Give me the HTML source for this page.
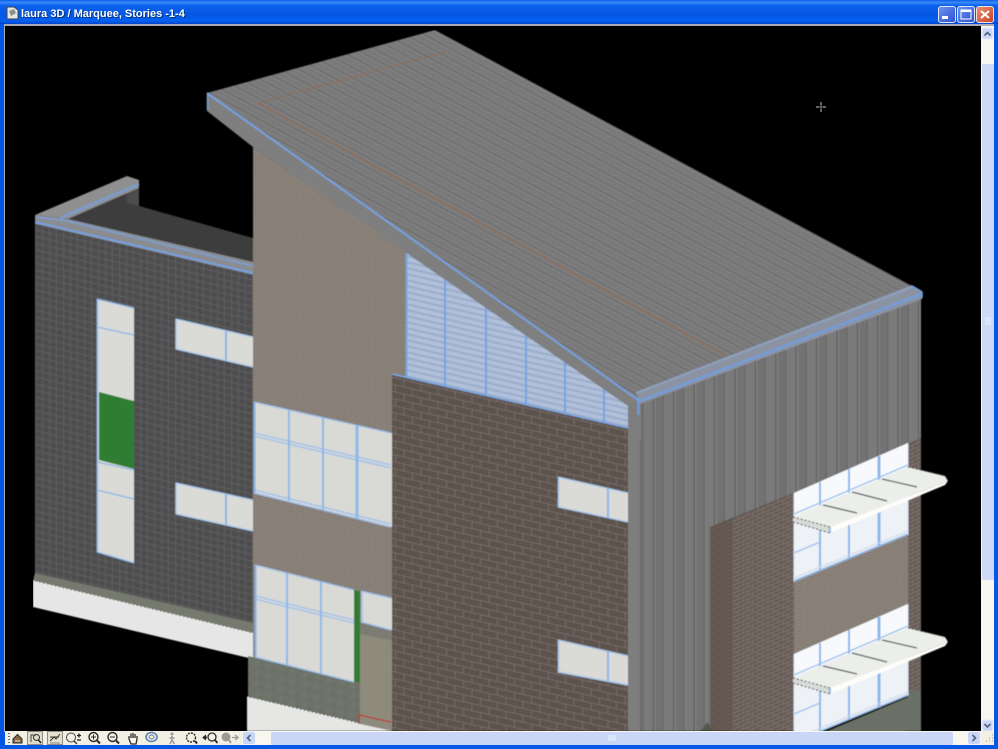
<!DOCTYPE html>
<html><head><meta charset="utf-8"><title>laura 3D</title>
<style>html,body{margin:0;padding:0;background:#000;overflow:hidden}svg{display:block}</style></head>
<body>
<svg xmlns="http://www.w3.org/2000/svg" width="998" height="749" viewBox="0 0 998 749">
<defs>
<filter id="soft" x="0" y="0" width="100%" height="100%"><feGaussianBlur stdDeviation=".45"/></filter>
<filter id="soft2" x="-5%" y="-5%" width="110%" height="110%"><feGaussianBlur stdDeviation=".3"/></filter>
<linearGradient id="tb" x1="0" y1="0" x2="0" y2="1">
<stop offset="0" stop-color="#0a5ce8"/><stop offset=".1" stop-color="#3a8cfa"/><stop offset=".22" stop-color="#0d63ec"/><stop offset=".6" stop-color="#0457e4"/><stop offset=".88" stop-color="#0560f0"/><stop offset="1" stop-color="#0244c8"/>
</linearGradient>
<linearGradient id="btn" x1="0" y1="0" x2="1" y2="1"><stop offset="0" stop-color="#6f94ee"/><stop offset="1" stop-color="#2c4fd0"/></linearGradient>
<linearGradient id="cls" x1="0" y1="0" x2="1" y2="1"><stop offset="0" stop-color="#ea9478"/><stop offset="1" stop-color="#c8401c"/></linearGradient>
<pattern id="roof" width="9" height="9" patternUnits="userSpaceOnUse" patternTransform="rotate(28.3)">
<rect width="9" height="9" fill="#7b7b7b"/><rect y="0" width="9" height="1" fill="#666667"/><rect y="1" width="9" height="1" fill="#848485"/>
<rect y="4" width="9" height="1" fill="#777778"/>
</pattern>
<pattern id="tan" width="6" height="5" patternUnits="userSpaceOnUse" patternTransform="skewY(13)">
<rect width="6" height="5" fill="#898178"/><path d="M0 1L3 0L6 1M0 3.500L3 2.500L6 3.500" stroke="#999188" stroke-width=".8" fill="none"/><path d="M0 2.200L3 1.200L6 2.200M0 4.700L3 3.700L6 4.700" stroke="#797068" stroke-width=".8" fill="none"/>
</pattern>
<pattern id="brick" width="17" height="14" patternUnits="userSpaceOnUse" patternTransform="skewY(12.9)">
<rect width="17" height="14" fill="#5d524e"/>
<path d="M0 .5H17M0 7.500H17" stroke="#776b66" stroke-width="1"/><path d="M4.500 0V7M13 7V14" stroke="#776b66" stroke-width="1"/>
</pattern>
<pattern id="brick2" width="10" height="8" patternUnits="userSpaceOnUse" patternTransform="skewY(-23)">
<rect width="10" height="8" fill="#685c58"/>
<path d="M0 .5H10M0 4.500H10" stroke="#7d726b" stroke-width=".9"/><path d="M3 0V4M8 4V8" stroke="#7d726b" stroke-width=".9"/>
</pattern>
<pattern id="dark" width="7" height="6.7" patternUnits="userSpaceOnUse" patternTransform="skewY(13)">
<rect width="7" height="6.7" fill="#4d4d4f"/><rect width="7" height="1" fill="#615f5e"/><rect width="1" height="6.7" fill="#5f5d5c"/>
</pattern>
<pattern id="metal" width="20.4" height="10" patternUnits="userSpaceOnUse">
<rect width="20.4" height="10" fill="#727272"/><rect x="0" width="1.400" height="10" fill="#5f5f5f"/><rect x="1.400" width="1.200" height="10" fill="#858585"/><rect x="10.200" width="1.200" height="10" fill="#656565"/><rect x="11.400" width="1" height="10" fill="#828282"/><rect x="12.400" width="8" height="10" fill="#7a7a7a"/>
</pattern>
<pattern id="glass" width="10" height="6" patternUnits="userSpaceOnUse" patternTransform="skewY(12.9)">
<rect width="10" height="6" fill="#b0c0da"/><rect width="10" height="2" fill="#9aacc9"/>
</pattern>
<pattern id="conc" width="12" height="10" patternUnits="userSpaceOnUse" patternTransform="skewY(13)">
<rect width="12" height="10" fill="#6e7369"/><rect x="3" y="2" width="4" height="4" fill="#72776d"/><rect x="8" y="6" width="3" height="3" fill="#696e64"/>
</pattern>
<g id="rwin">
<polygon points="794,493 908,443 908,535 794,582" fill="#eef1f6"/>
<polygon points="794,493 908,443 908,467 794,517" fill="#f7f9fd"/>
<path d="M820 482V571M849 469V559M879 456V547" stroke="#8db7ea" stroke-width="2" fill="none"/>
<path d="M879 456V547" stroke="#8db7ea" stroke-width="3"/>
<path d="M794 514L908 465" stroke="#9cc0ec" stroke-width="1.400" fill="none"/>
<path d="M794 553L820 542" stroke="#9cc0ec" stroke-width="1.400" fill="none"/>
<path d="M794 581L908 534" stroke="#8db7ea" stroke-width="1.600" fill="none"/>
<path d="M794 578L908 531" stroke="#c8d8ea" stroke-width="1" fill="none"/>
<path d="M794 493V582M908 443V535" stroke="#cfdcec" stroke-width="1" fill="none"/>
<polygon points="793,517 908,467 945,476 948,481 830,527" fill="#eceeea"/>
<polygon points="830,527 948,481 945,485 830,533" fill="#fdfdfb"/>
<polygon points="793,517 830,527 830,533 793,522" fill="#d8dcd8"/>
<path d="M793 517L830 527M793 522L830 533" stroke="#333" stroke-width="1" stroke-dasharray="2 2" fill="none"/>
<path d="M908 467L945 476" stroke="#555" stroke-width="1" stroke-dasharray="2 2" fill="none"/>
<path d="M823 505L857 513M852 492L887 501M882 479L917 487" stroke="#4a525c" stroke-width="1.300" fill="none"/>
<path d="M830 527V533" stroke="#7aa6d8" stroke-width="1.500"/>
</g>
</defs>

<rect width="998" height="749" fill="#0456e4"/>
<rect width="998" height="24" fill="url(#tb)"/>
<rect x="4" y="24" width="990" height="2" fill="#a9a8b4"/>
<rect x="4" y="24" width="1" height="708" fill="#a9a8b4"/>
<rect x="5" y="26" width="976" height="705" fill="#000"/>

<g filter="url(#soft)">
<!-- left dark wing -->
<polygon points="68,219 139,188 139,206 253,238 253,263" fill="#3d3d3d"/>
<polygon points="127,192 139,188 139,206 127,203" fill="#4e4e4e"/>
<polygon points="35,215 127,176 139,180 139,188 68,219" fill="#8f8f90"/>
<polygon points="35,215 68,219 253,262 253,275 35,224" fill="#8a8c90"/>
<polygon points="35,224 253,275 253,628 35,575" fill="url(#dark)"/>
<path d="M35 222L253 273" stroke="#74a0de" stroke-width="2" fill="none"/>
<path d="M36 217L68 221L253 266" stroke="#7e9cc6" stroke-width="2" fill="none"/>
<path d="M60 218L139 184" stroke="#7e9cc6" stroke-width="3" fill="none"/>
<polygon points="35,573 253,623 253,634 33,581" fill="#767a6e"/>
<polygon points="33,581 255,634 253,659 33,607" fill="#e6e6e6"/>
<path d="M33 581L255 634" stroke="#fff" stroke-width="1" stroke-dasharray="2 2"/>

<polygon points="97,299 134,308 134,563 97,552" fill="#dadad7"/>
<polygon points="99,392 134,401 134,469 99,460" fill="#2e7d33"/>
<path d="M97 327L134 335M97 462L134 470M97 490L134 499M97 299L134 308M97 552L134 563" stroke="#8db5e6" stroke-width="1.300" fill="none"/>
<path d="M97.500 299V552" stroke="#9cc3ee" stroke-width="1.600"/>
<polygon points="176,319 253,337 253,367 176,349" fill="#dadad7"/>
<path d="M176 319L253 337M176 349L253 367M176 319V349" stroke="#a5c6ec" stroke-width="1.400" fill="none"/><path d="M226 331V361" stroke="#8db5e6" stroke-width="2"/>
<polygon points="176,483 253,500 253,531 176,514" fill="#dadad7"/>
<path d="M176 483L253 500M176 514L253 531M176 483V514" stroke="#a5c6ec" stroke-width="1.400" fill="none"/><path d="M226 494V525" stroke="#8db5e6" stroke-width="2"/>

<!-- tan wall -->
<polygon points="253,147 406,252 406,382 394,378 394,731 253,731" fill="url(#tan)"/>
<polygon points="248,656 360,682 360,724 248,697" fill="url(#conc)"/>
<polygon points="360,622 394,630 394,731 360,724" fill="#8e8a7b"/>
<polygon points="360,622 394,630 394,641 360,634" fill="#7d7b72"/>
<polygon points="247,697 360,724 392,731 247,731" fill="#e6e6e4"/>
<path d="M247 697L357 723" stroke="#fff" stroke-width="1" stroke-dasharray="2 2"/>

<!-- windows on tan wall -->
<polygon points="254,402 392,433 392,527 254,493" fill="#d9d9d6"/>
<path d="M254 402L391 433M254 433L391 465M254 436L391 468M254 493L391 527M254 490L391 524" stroke="#9cc0ec" stroke-width="1.400" fill="none"/>
<path d="M254.500 402V493" stroke="#86b0e4" stroke-width="2"/>
<path d="M289 410V501M323 418V510" stroke="#8db7ea" stroke-width="2"/><path d="M357 425V518" stroke="#8db7ea" stroke-width="3"/>

<polygon points="255,565 354,590 354,682 255,657" fill="#d9d9d6"/>
<path d="M255 565L354 590M255 596L354 620M255 599L354 623M255 657L354 682" stroke="#9cc0ec" stroke-width="1.400" fill="none"/>
<path d="M255.500 565V657" stroke="#86b0e4" stroke-width="2"/>
<path d="M287 573V665M321 582V674" stroke="#8db7ea" stroke-width="2"/>
<polygon points="354,590 360,591 360,682 354,682" fill="#2e7d33"/>
<polygon points="361,591 392,598 392,630 361,622" fill="#d9d9d6"/>
<path d="M361 591L391 598M361 622L391 630M362 591V622" stroke="#9cc0ec" stroke-width="1.400" fill="none"/>
<path d="M359 723V715L391 722" stroke="#c03434" stroke-width="1.200" fill="none"/>

<!-- glass -->
<polygon points="406,252 628,405 628,428 406,378" fill="url(#glass)"/>
<path d="M406.500 252V378M445 279V387M486 307V396M526 335V405M565 362V414M604 389V423" stroke="#74a4e2" stroke-width="2" fill="none"/>

<!-- brick centre -->
<polygon points="392,374 628,428 628,731 392,731" fill="url(#brick)"/>
<path d="M392 374L628 428" stroke="#7aa6e0" stroke-width="1.600"/>
<polygon points="558,477 628,493 628,522 558,507" fill="#dadad7"/>
<path d="M558 477L628 493M558 507L628 522M558.500 477V507" stroke="#a5c6ec" stroke-width="1.400" fill="none"/><path d="M608 488V518" stroke="#8db5e6" stroke-width="2"/>
<polygon points="558,640 628,656 628,685 558,672" fill="#dadad7"/>
<path d="M558 640L628 656M558 672L628 685M558.500 640V672" stroke="#a5c6ec" stroke-width="1.400" fill="none"/><path d="M608 651V681" stroke="#8db5e6" stroke-width="2"/>

<!-- right wall -->
<polygon points="640,403 921,297 921,445 908,443 794,493 710,527 710,731 640,731" fill="url(#metal)"/>
<polygon points="628,405 641,400 641,731 628,731" fill="#7e7e7e"/>
<path d="M640.500 403V731" stroke="#666" stroke-width="1"/>
<polygon points="710,527 794,493 794,731 710,731" fill="url(#brick2)"/>
<polygon points="710,527 733,518 733,731 710,731" fill="#5c4e49" opacity=".55"/>
<polygon points="908,443 921,438 921,700 908,700" fill="url(#brick2)"/>
<polygon points="908,690 921,690 921,731 908,731" fill="#6b7066"/>
<polygon points="794,582 908,535 908,605 794,655" fill="url(#tan)"/>
<polygon points="794,745 908,697 908,731 794,745" fill="#6b7066"/>
<polygon points="700,731 708,722 712,731" fill="#4f5a4c"/>

<use href="#rwin"/>
<use href="#rwin" transform="translate(0,161)"/>

<!-- roof -->
<polygon points="207,93 207,111 253,147 628,406 640,414 640,398" fill="#7f7f80"/>
<polygon points="628,404 641,400 641,440 628,440" fill="#7e7e7e"/>
<polygon points="207,93 435,30 912,286 638,400" fill="url(#roof)"/>
<path d="M258 103L452 50" stroke="#94694a" stroke-width="1.100" stroke-dasharray="3 1" fill="none"/>
<path d="M258 103L725 355" stroke="#94694a" stroke-width="1.100" fill="none"/>
<polygon points="636,392 912,285 922,291 922,299 640,404" fill="#8b93a3"/>
<path d="M636 393L912 287" stroke="#8ea4c4" stroke-width="1.500"/>
<path d="M640 401L922 294" stroke="#6f9fe0" stroke-width="2.200"/>
<path d="M912 286L922 292V298" stroke="#6f9fe0" stroke-width="1.500" fill="none"/>
<path d="M207 93L638 400" stroke="#76a2dc" stroke-width="2"/>
<path d="M207.500 93V110" stroke="#76a2dc" stroke-width="1.500"/>
<path d="M638.500 398V415" stroke="#6f9fe0" stroke-width="2"/>
</g>

<!-- crosshair -->
<path d="M816 107H819M823 107H826M821 102V105M821 109V112" stroke="#c4c4c4" stroke-width="1" fill="none"/>
<path d="M819 107H823M821 105V109" stroke="#777" stroke-width="1" fill="none"/>

<!-- title bar -->
<path d="M7 7H14L18 10V19H7Z" fill="#e6e6e0" stroke="#39465c" stroke-width="1"/>
<path d="M9 11L14 9L16 13L11 16Z" fill="#8b8f8a"/>
<text x="22" y="18" font-family="'Liberation Sans',sans-serif" font-size="11" font-weight="bold" fill="#000" opacity=".45">laura 3D / Marquee, Stories -1-4</text>
<text x="21" y="17" font-family="'Liberation Sans',sans-serif" font-size="11" font-weight="bold" fill="#fff">laura 3D / Marquee, Stories -1-4</text>

<rect x="938.500" y="6.500" width="17" height="16" rx="2.500" fill="url(#btn)" stroke="#dfe6fa"/>
<rect x="942" y="16" width="6" height="3" fill="#fff"/>
<rect x="957.500" y="6.500" width="17" height="16" rx="2.500" fill="url(#btn)" stroke="#dfe6fa"/>
<rect x="961" y="10" width="10" height="9" fill="none" stroke="#fff"/><rect x="961" y="10" width="10" height="2" fill="#fff"/>
<rect x="976.500" y="6.500" width="17" height="16" rx="2.500" fill="url(#cls)" stroke="#f0e0da"/>
<path d="M981 11L989 18M989 11L981 18" stroke="#fff" stroke-width="2"/>

<!-- vertical scrollbar -->
<rect x="981" y="26" width="13" height="705" fill="#f7f6ef"/>
<rect x="982" y="28" width="11" height="11" rx="2" fill="#c9d6f6" stroke="#e6ecfb"/>
<path d="M984.500 35.500L987.500 32.500L990.500 35.500" stroke="#4d6185" stroke-width="1.600" fill="none"/>
<rect x="982" y="64" width="12" height="516" rx="1" fill="#cdd9f7"/>
<path d="M985 318H991M985 320H991M985 322H991M985 324H991" stroke="#edf1fd" stroke-width="1"/>
<rect x="982" y="720" width="11" height="11" rx="2" fill="#c9d6f6" stroke="#e6ecfb"/>
<path d="M984.500 724L987.500 727L990.500 724" stroke="#4d6185" stroke-width="1.600" fill="none"/>

<!-- bottom bar -->
<rect x="5" y="731" width="989" height="14" fill="#f2f0e2"/>
<rect x="242" y="731" width="739" height="14" fill="#f7f6ef"/>
<rect x="271" y="732" width="682" height="13" rx="1" fill="#c9d6f6"/>
<path d="M609 735V741M611 735V741M613 735V741M615 735V741" stroke="#edf1fd"/>
<rect x="243" y="732" width="12" height="12" rx="2" fill="#c9d6f6"/>
<path d="M250.500 735L247.500 738L250.500 741" stroke="#4d6185" stroke-width="1.600" fill="none"/>
<rect x="968" y="732" width="12" height="12" rx="2" fill="#c9d6f6"/>
<path d="M972.500 735L975.500 738L972.500 741" stroke="#4d6185" stroke-width="1.600" fill="none"/>
<path d="M986 741h1M989 741h1M992 741h1M989 738h1M992 738h1M992 735h1" stroke="#b9b6a6" stroke-width="1.500"/>

<!-- toolbar icons -->
<g fill="none" stroke="#2c2c2c" stroke-width="1" filter="url(#soft2)">
<path d="M9 733v1M9 736v1M9 739v1M9 742v1" stroke-width="1.300"/>
<path d="M13 739L17.500 734.500L22 739V743H13Z" fill="#8a6a4a"/><path d="M15 741h5" stroke="#eee"/>
<rect x="27.500" y="731.500" width="15" height="13" fill="#dfdcc9" stroke="#8d8d84"/>
<path d="M31 742V735H36" stroke="#444"/><circle cx="36.500" cy="737.500" r="3" stroke="#333"/><path d="M38.500 740L41 743" stroke="#222" stroke-width="1.500"/>
<rect x="47.500" y="731.500" width="15" height="13" fill="#e3e0ce" stroke="#8d8d84"/>
<path d="M50 737H59M50 741L54 737L56 739L60 734" stroke="#333"/><path d="M50 743H60" stroke="#888"/>
<circle cx="71" cy="737.500" r="4.500" stroke="#444"/><path d="M74 741L77 744" stroke-width="1.500" stroke="#444"/><path d="M77 735.500H81M79 733.500V737.500M77 740H81" stroke="#222" stroke-width="1.300"/>
<circle cx="93.500" cy="737" r="4.500" stroke-width="1.400"/><path d="M97 740.500L100 743.500" stroke-width="2"/><path d="M91 737H96M93.500 734.500V739.500"/>
<circle cx="112.500" cy="737" r="4.500" stroke-width="1.400"/><path d="M116 740.500L119 743.500" stroke-width="2"/><path d="M110 737H115"/>
<path d="M129 739V736M131 738V733.500M133 738V733M135 738V734M137 739V736M129 739L131 744H136L137 739" stroke-width="1.300" fill="#f5f5ee"/>
<ellipse cx="151.500" cy="737" rx="5.500" ry="4.500" stroke="#5b7db4" stroke-width="1.600"/><ellipse cx="151.500" cy="737" rx="2.500" ry="2" stroke="#5b7db4"/>
<circle cx="172" cy="734" r="1.500" fill="#999" stroke="none"/><path d="M172 736V740L170 744M172 740L174.500 744M169.500 738L174.500 738" stroke="#999" stroke-width="1.500"/>
<circle cx="191" cy="737.500" r="4.500" stroke-width="1.400" stroke-dasharray="2 1"/><path d="M195 741L197 743.500" stroke-width="2"/>
<path d="M203 737.500H207" stroke-width="1.600"/><path d="M206 735L203 737.500L206 740" fill="#222"/><circle cx="212" cy="737" r="4" stroke-width="1.300"/><path d="M215 740L217.500 743" stroke-width="1.800"/>
<circle cx="226" cy="737" r="4" stroke="#9a9a92" fill="#9a9a92"/><path d="M229 740L231 743" stroke="#9a9a92" stroke-width="1.800"/><path d="M232 737.500H237M235 735L238 737.500L235 740" stroke="#9a9a92" stroke-width="1.300"/>
</g>
</svg>
</body></html>
